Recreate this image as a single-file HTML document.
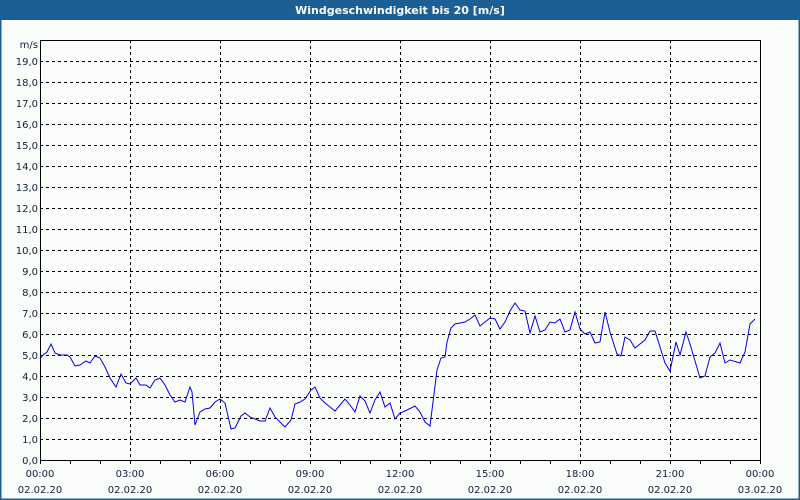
<!DOCTYPE html>
<html><head><meta charset="utf-8"><style>
html,body{margin:0;padding:0;width:800px;height:500px;overflow:hidden;background:#fbfdfb;}
svg text{font-family:"DejaVu Sans","Liberation Sans",sans-serif;font-size:10px;fill:#10203a;}
</style></head><body>
<svg width="800" height="500" xmlns="http://www.w3.org/2000/svg">
<rect x="0" y="0" width="800" height="500" fill="#fbfdfb"/>
<rect x="0.5" y="0.5" width="799" height="499" fill="none" stroke="#1c5f95" stroke-width="2"/>
<rect x="0" y="0" width="800" height="20" fill="#1c5f95"/>
<text x="400" y="14" text-anchor="middle" style="fill:#fff;font-weight:bold;font-size:11px">Windgeschwindigkeit bis 20 [m/s]</text>
<g stroke="#000" stroke-width="1" stroke-dasharray="3,3" fill="none">
<path d="M40 61.5H760M40 82.5H760M40 103.5H760M40 124.5H760M40 145.5H760M40 166.5H760M40 187.5H760M40 208.5H760M40 229.5H760M40 250.5H760M40 271.5H760M40 292.5H760M40 313.5H760M40 334.5H760M40 355.5H760M40 376.5H760M40 397.5H760M40 418.5H760M40 439.5H760"/>
<path d="M130.5 40V460M220.5 40V460M310.5 40V460M400.5 40V460M490.5 40V460M580.5 40V460M670.5 40V460"/>
</g>
<rect x="40.5" y="40.5" width="720" height="420" fill="none" stroke="#000" stroke-width="1"/>
<path stroke="#000" d="M70.5 460V464M100.5 460V464M130.5 460V464M160.5 460V464M190.5 460V464M220.5 460V464M250.5 460V464M280.5 460V464M310.5 460V464M340.5 460V464M370.5 460V464M400.5 460V464M430.5 460V464M460.5 460V464M490.5 460V464M520.5 460V464M550.5 460V464M580.5 460V464M610.5 460V464M640.5 460V464M670.5 460V464M700.5 460V464M730.5 460V464M760.5 460V464M40.5 460V464"/>
<g text-anchor="end">
<text x="38" y="48">m/s</text>
<text x="38" y="65">19,0</text><text x="38" y="86">18,0</text><text x="38" y="107">17,0</text><text x="38" y="128">16,0</text><text x="38" y="149">15,0</text><text x="38" y="170">14,0</text><text x="38" y="191">13,0</text><text x="38" y="212">12,0</text><text x="38" y="233">11,0</text><text x="38" y="254">10,0</text><text x="38" y="275">9,0</text><text x="38" y="296">8,0</text><text x="38" y="317">7,0</text><text x="38" y="338">6,0</text><text x="38" y="359">5,0</text><text x="38" y="380">4,0</text><text x="38" y="401">3,0</text><text x="38" y="422">2,0</text><text x="38" y="443">1,0</text><text x="38" y="464">0,0</text>
</g>
<g text-anchor="middle">
<text x="40" y="477">00:00</text><text x="130" y="477">03:00</text><text x="220" y="477">06:00</text><text x="310" y="477">09:00</text><text x="400" y="477">12:00</text><text x="490" y="477">15:00</text><text x="580" y="477">18:00</text><text x="670" y="477">21:00</text><text x="760" y="477">00:00</text>
<text x="40" y="493">02.02.20</text><text x="130" y="493">02.02.20</text><text x="220" y="493">02.02.20</text><text x="310" y="493">02.02.20</text><text x="400" y="493">02.02.20</text><text x="490" y="493">02.02.20</text><text x="580" y="493">02.02.20</text><text x="670" y="493">02.02.20</text><text x="760" y="493">03.02.20</text>
</g>
<polyline fill="none" stroke="#0000ee" stroke-width="1" points="40,359 43,355 47,352 51,344 55,353 60,355 67,355 70,357 75,366 80,365 86,361 90,363 95,356 100,358 105,367 110,378 116,387 121,374 126,383 130,384 136,378 140,385 146,385 150,388 155,380 160,378 165,385 170,395 175,402 180,400 185,402 190,387 192,392 195,425 200,412 205,409 210,408 215,402 220,399 225,403 231,429 235,428 241,416 245,413 250,417 255,419 260,421 265,421 270,408 275,417 285,427 291,420 295,404 300,402 305,399 311,390 315,387 320,398 325,403 330,407 335,411 340,405 345,399 350,405 355,412 360,396 365,401 370,413 375,400 380,392 385,407 390,403 395,419 400,413 405,411 415,406 420,412 425,422 430,426 433,402 437,370 441,358 445,357 447,342 451,328 455,324 460,323 465,322 470,319 475,315 480,326 485,322 490,318 495,319 500,329 505,322 510,311 515,303 520,310 525,311 530,333 535,316 540,332 545,330 550,322 555,323 560,319 565,332 570,330 575,312 580,329 585,334 590,332 595,343 600,342 605,312 610,332 617,354 621,356 625,337 630,340 635,348 645,340 650,331 655,331 665,363 670,371 676,342 680,355 686,332 690,344 700,378 705,376 710,357 715,353 720,343 725,363 730,360 740,363 745,352 750,324 755,319"/>
</svg>
</body></html>
